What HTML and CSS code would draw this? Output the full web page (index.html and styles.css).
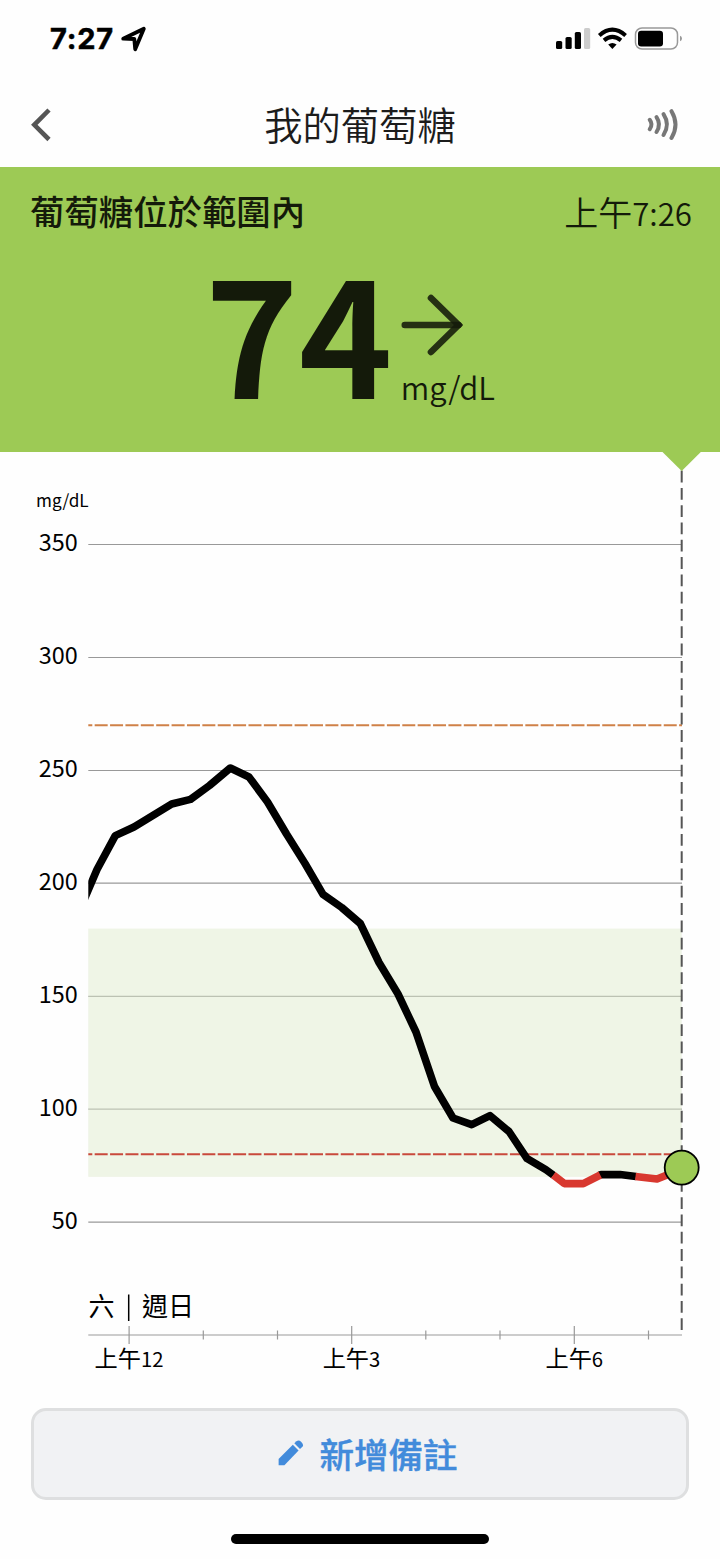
FILE: index.html
```html
<!DOCTYPE html>
<html lang="zh-Hant">
<head>
  <meta charset="UTF-8" />
  <meta name="viewport" content="width=device-width, initial-scale=1" />
  <title>我的葡萄糖</title>
  <link rel="stylesheet" href="styles.css">
</head>
<body>

  <div class="status-bar">
    <div class="status-left">
      <span class="clock">7:27</span>
      <svg width="26" height="26" viewBox="0 0 26 26">
        <path d="M2.2 12.7 L22.8 2.8 L14.2 23.2 L13.3 13 Z" fill="none" stroke="#000" stroke-width="3.8" stroke-linejoin="round"/>
      </svg>
    </div>
    <div class="status-right">
      <svg width="126" height="24" viewBox="0 0 126 24">
        <rect x="0" y="14" width="6.2" height="8" rx="1.6"/>
        <rect x="9.5" y="10" width="6.2" height="12" rx="1.6"/>
        <rect x="18.8" y="5" width="6.2" height="17" rx="1.6"/>
        <rect x="28" y="1" width="6.2" height="21" rx="1.6" fill="#ccc"/>
        <g fill="none" stroke="#000" stroke-width="4">
          <path d="M43.3 8.4 Q56.3 -3.2 69.6 8.4"/>
          <path d="M48 13.4 Q56.3 6.4 65 13.4"/>
        </g>
        <path d="M52.2 17.6 Q56.4 14.2 60.6 17.6 L56.4 22 Z"/>
        <rect x="79.5" y="1" width="42" height="21" rx="6.5" fill="none" stroke="#999" stroke-width="1.5"/>
        <rect x="82" y="3.7" width="25" height="15.8" rx="3.2"/>
        <path d="M124 8.7 Q126 9.5 126 11.5 T124 14.3 Z" fill="#999"/>
      </svg>
    </div>
  </div>

  <div class="nav">
    <svg width="34" height="36" viewBox="0 0 34 36">
      <path d="M20 3 L5.3 17.8 L20 32.5" fill="none" stroke="#555" stroke-width="4.6"/>
    </svg>
    <div class="title">我的葡萄糖</div>
    <svg width="34" height="36" viewBox="0 0 34 36">
      <g fill="none" stroke="#777" stroke-width="4" stroke-linecap="round">
        <path d="M3.7 12.8 Q7.3 17.5 3.7 22.2"/>
        <path d="M10.5 10.2 Q15.5 17.5 10.5 25"/>
        <path d="M17.5 7.2 Q24.3 17.5 17.5 28"/>
        <path d="M25.5 4.2 Q33.5 17.5 25.5 31"/>
      </g>
    </svg>
  </div>

  <div class="banner">
    <div class="banner-top">
      <div class="message">葡萄糖位於範圍內</div>
      <div class="time">上午<span>7:26</span></div>
    </div>
    <div class="reading">
      <div class="value">74</div>
      <div class="trend">
        <svg width="62" height="62" viewBox="0 0 62 62">
          <g stroke="#141a0a" stroke-width="6.6" stroke-linecap="round" stroke-opacity="0.88">
            <path d="M3.8 31 H57.5"/>
            <path d="M30 4 L57.5 31 L30 58" fill="none"/>
          </g>
        </svg>
        <span class="unit">mg/dL</span>
      </div>
    </div>
  </div>

  <svg class="chart" width="720" height="932" viewBox="0 0 720 932">
    <defs>
      <clipPath id="plot"><rect x="88.3" y="0" width="631" height="900"/></clipPath>
    </defs>

    <!-- gridlines -->
    <g class="grid">
      <path d="M88.3 92.5 H682"/>
      <path d="M88.3 205.5 H682"/>
      <path d="M88.3 318.5 H682"/>
      <path d="M88.3 431.2 H682"/>
      <path d="M88.3 544.3 H682"/>
      <path d="M88.3 657.2 H682"/>
      <path d="M88.3 770.1 H682"/>
    </g>

    <!-- target range -->
    <rect class="target" x="88.3" y="476.6" width="593.4" height="248.2"/>

    <path class="alarm high" d="M88.3 273.2 H682"/>
    <path class="alarm low" d="M88.3 702.2 H682"/>

    <!-- now marker -->
    <path class="now" d="M681.7 18.6 V878"/>
    <path class="pointer" d="M662.5 0 H700.8 L681.7 19 Z"/>

    <!-- glucose trace -->
    <g class="trace" clip-path="url(#plot)">
      <polyline points="84,448 97,417.5 115.3,383.6 134,375 171.7,352 190.5,347.4 209.5,333.5 230.3,316 249,325 267.5,350 286.5,382 305,411.5 323,442.3 341.7,455.5 360.3,471.5 379,510.5 398,542 416,580 434.5,634.5 453,666 471.7,672.6 490,663.6 509,679.5 527,706.6 546,717.8 553.5,723.3"/>
      <polyline points="599,723.3 601,722.6 620,722.6 636,724.5"/>
      <polyline points="671,724.5 682,716"/>
      <polyline class="below" points="553.3,723 564.3,731.6 583.3,731.6 600.3,723"/>
      <polyline class="below" points="635.5,724.5 657,727 667,723"/>
    </g>
    <circle class="dot" cx="681.7" cy="715.6" r="17"/>

    <!-- y labels -->
    <text class="y-unit" x="36" y="55">mg/dL</text>
    <g class="y-labels">
      <text x="77.7" y="99">350</text>
      <text x="77.7" y="212">300</text>
      <text x="77.7" y="325">250</text>
      <text x="77.7" y="438">200</text>
      <text x="77.7" y="551">150</text>
      <text x="77.7" y="664">100</text>
      <text x="77.7" y="777">50</text>
    </g>

    <!-- x axis -->
    <g class="axis">
      <path d="M88.3 883 H682"/>
      <path d="M129.1 874 V892 M351.7 874 V892 M574.3 874 V892"/>
      <path d="M203.3 878.5 V887.5 M277.5 878.5 V887.5 M425.8 878.5 V887.5 M500 878.5 V887.5 M648.5 878.5 V887.5"/>
      <path class="day-line" d="M128.7 842.5 V869"/>
    </g>
    <text class="day" x="88.5" y="863.5">六</text>
    <text class="day" x="142" y="863.5">週日</text>
    <g class="x-labels">
      <text x="129" y="914.5">上午<tspan>12</tspan></text>
      <text x="351.5" y="914.5">上午<tspan>3</tspan></text>
      <text x="574.3" y="914.5">上午<tspan>6</tspan></text>
    </g>
  </svg>

  <button class="add-note">
    <svg width="26" height="26" viewBox="0 0 26 26">
      <path d="M0.6 19 L14.8 4.8 L20.6 10.6 L6.4 25.2 H0.6 Z"/>
      <path d="M16.3 3.3 L18.5 1.3 Q20.7 -0.5 23.3 2 Q26.2 4.8 24.4 6.8 L22 9 Z"/>
    </svg>
    <span>新增備註</span>
  </button>

  <div class="home-indicator"></div>

</body>
</html>
```

FILE: styles.css
```css
* {
  box-sizing: border-box;
}

body {
  margin: 0;
  width: 720px;
  height: 1559px;
  overflow: hidden;
  display: flex;
  flex-direction: column;
  background: #fefefe;
  color: #141a0a;
  font-family: "Noto Sans CJK TC", "Noto Sans", sans-serif;
}

svg {
  display: block;
  flex: none;
}

.status-bar {
  height: 82px;
  padding: 0 38px 4px 50px;
  display: flex;
  justify-content: space-between;
  align-items: center;
}

.status-left {
  display: flex;
  align-items: center;
  gap: 6px;
}

.clock {
  width: 65px;
  font-family: Inter, sans-serif;
  font-size: 29px;
  font-weight: 700;
  line-height: 36px;
  letter-spacing: 0.8px;
  color: #000;
  -webkit-text-stroke: 0.5px #000;
}

.nav {
  height: 85px;
  padding: 0 40px 0 29px;
  display: flex;
  justify-content: space-between;
  align-items: center;
}

.title {
  flex: 1;
  padding: 0 0 2px 11px;
  text-align: center;
  font-size: 38.3px;
  font-weight: 350;
  line-height: 50px;
  color: #1c1c1c;
}

.banner {
  height: 285px;
  padding: 18px 28px 0 30px;
  background: #9dca55;
}

.banner-top {
  display: flex;
  justify-content: space-between;
  line-height: 50px;
}

.message {
  font-size: 34.4px;
  font-weight: 500;
}

.time {
  font-size: 34px;
  font-weight: 350;
  padding-top: 2px;
}

.time span {
  font-size: 31.2px;
}

.reading {
  display: flex;
  justify-content: center;
  padding: 28px 22px 0 0;
  gap: 8px;
}

.value {
  margin-top: -16px;
  font-size: 159px;
  font-weight: 700;
  line-height: 160px;
}

.trend {
  padding-top: 28px;
}

.unit {
  display: block;
  font-size: 31px;
  font-weight: 350;
  line-height: 50px;
  padding-top: 6px;
}

.chart text {
  fill: #000;
}

.grid,
.axis {
  fill: none;
  stroke: #999;
  stroke-width: 1.2;
}

.day-line {
  stroke: #000;
  stroke-width: 1.5;
}

.target {
  fill: #dfebce;
  fill-opacity: 0.5;
}

.alarm {
  fill: none;
  stroke-width: 2;
  stroke-dasharray: 13 2.38;
  stroke-dashoffset: 9;
}

.high {
  stroke: #cf8148;
}

.low {
  stroke: #c9493c;
}

.now {
  stroke: #555;
  stroke-width: 2;
  stroke-dasharray: 11.8 5.5;
}

.pointer {
  fill: #9dca55;
}

.trace polyline {
  fill: none;
  stroke: #000;
  stroke-width: 7.6;
  stroke-linejoin: round;
}

.trace .below {
  stroke: #d8382f;
}

.dot {
  fill: #9dca55;
  stroke: #000;
  stroke-width: 1.8;
}

.y-unit {
  font-size: 17.2px;
}

.y-labels {
  font-size: 23.4px;
  text-anchor: end;
}

.day {
  font-size: 26px;
}

.x-labels {
  font-size: 23.2px;
  text-anchor: middle;
}

.x-labels tspan {
  font-size: 20.3px;
}

.add-note {
  width: 658px;
  height: 92px;
  margin: 24px 0 0 31px;
  padding: 0 0 2px 15px;
  display: flex;
  justify-content: center;
  align-items: center;
  gap: 16px;
  flex: none;
  background: #f1f2f4;
  border: 3px solid #dedfe0;
  border-radius: 15px;
  color: #428bdb;
  font-family: inherit;
  font-size: 34.5px;
  font-weight: 500;
  -webkit-text-stroke: 0.4px #428bdb;
}

.add-note svg {
  fill: #428bdb;
}

.home-indicator {
  width: 258px;
  height: 10px;
  margin: 34px 0 0 231px;
  background: #000;
  border-radius: 5px;
}
```
